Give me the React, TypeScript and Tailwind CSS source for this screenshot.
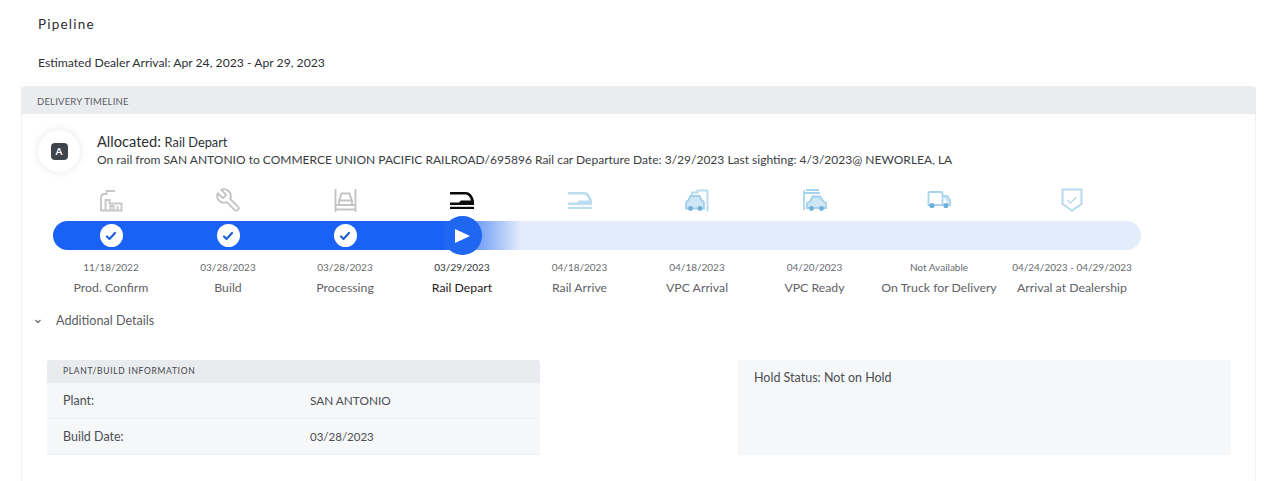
import React from "react";

const Factory = () => (
  <svg width="24" height="23" viewBox="0 0 24 23" fill="none" stroke="#c8c8c8" strokeWidth="1.900">
    <path d="M2 21.500V8.500c0-2 1-3.500 3-3.500h2.500V2H16" />
    <path d="M1 21.500h22.500M6.500 21V11h4v3.500h12V21M11.500 21v-4h3v4M18.500 21v-4" />
  </svg>
);

const Wrench = () => (
  <svg width="27" height="27" viewBox="0 0 24 24" fill="none" stroke="#c4c4c4" strokeWidth="1.700" strokeLinejoin="round" strokeLinecap="round" className="-rotate-90">
    <path d="M14.700 6.300a1 1 0 0 0 0 1.400l1.600 1.600a1 1 0 0 0 1.400 0l3.770-3.770a6 6 0 0 1-7.940 7.940l-6.910 6.910a2.120 2.120 0 0 1-3-3l6.910-6.910a6 6 0 0 1 7.940-7.940l-3.760 3.760z" />
  </svg>
);

const Lift = () => (
  <svg width="23" height="23" viewBox="0 0 23 23" fill="none" stroke="#c4c4c4" strokeWidth="1.900">
    <path d="M1.500 0v23M21.500 0v23M2 20.500h19M2 16h19" />
    <path d="M5 16v-4l2.500-7.500h8L18 12v4M5.500 11.500h12" />
  </svg>
);

const Train = ({ color }: { color: string }) => (
  <svg width="24" height="17" viewBox="0 0 24 17" fill={color}>
    <path d="M0 0H16C20 0 23 4 24 9V13H0V10.500H9L11 8.500H21C20 5 18 2.500 16 2.500H0Z" />
    <rect x="0" y="14.800" width="24" height="2.200" />
  </svg>
);

const RackCar = () => (
  <svg width="24" height="23" viewBox="0 0 24 23" fill="none">
    <path d="M22.500 1v21.500M7 6V3.500h5.500V1.500h10" stroke="#bcdcf0" strokeWidth="2" />
    <path d="M1 19.500v-5.500c0-1 1-2 2-2l2.500-5h9l2.500 5c1 0 2 1 2 2v5.500Z" stroke="#a3d0ec" strokeWidth="1.800" fill="#cfe6f5" />
    <circle cx="5.500" cy="19.500" r="2.400" fill="#6fb0da" />
    <circle cx="15" cy="19.500" r="2.400" fill="#6fb0da" />
  </svg>
);

const ReadyCar = () => (
  <svg width="24" height="23" viewBox="0 0 24 23" fill="none">
    <path d="M1 21V1.500M3 1h13M1 4h16" stroke="#a9d3ec" strokeWidth="1.800" />
    <path d="M4 19v-5l3-1.500 2.500-5h7.500l3.500 5c2 .5 3 1.500 3 3V19Z" stroke="#a3d0ec" strokeWidth="1.800" fill="#cfe6f5" />
    <circle cx="8.500" cy="19.500" r="2.400" fill="#6fb0da" />
    <circle cx="18.500" cy="19.500" r="2.400" fill="#6fb0da" />
  </svg>
);

const Truck = () => (
  <svg width="24" height="18" viewBox="0 0 24 18" fill="none">
    <path d="M3 14H1.500V2.500c0-1 .5-1.500 1.500-1.500h11c1 0 1.500.5 1.500 1.500V14H7" stroke="#a9d3ec" strokeWidth="1.800" />
    <path d="M16 5h4l3 4v5h-1.500M16 14h1" stroke="#a9d3ec" strokeWidth="1.800" fill="#cfe6f5" />
    <circle cx="5" cy="14.500" r="2.600" fill="#6fb0da" />
    <circle cx="19" cy="14.500" r="2.600" fill="#6fb0da" />
  </svg>
);

const Shield = () => (
  <svg width="22" height="24" viewBox="0 0 22 24" fill="none" stroke="#b8d8ec" strokeWidth="2">
    <path d="M1.500 1.500h19V16L11 22.500 1.500 16Z" />
    <path d="M6.500 12l3 3 6-6" strokeWidth="1.400" />
  </svg>
);

const CheckDot = () => (
  <span className="flex size-[23px] items-center justify-center rounded-full bg-white">
    <svg width="12" height="10" viewBox="0 0 12 10" fill="none" stroke="#1f5fd8" strokeWidth="2.200" strokeLinecap="round" strokeLinejoin="round">
      <path d="M2 5.500 4.500 8 10 2" />
    </svg>
  </span>
);

const PlayDot = () => (
  <span className="flex size-[39px] items-center justify-center rounded-full bg-[#1f66f0]">
    <svg width="15" height="14" viewBox="0 0 15 14" fill="white" className="ml-[1px]">
      <path d="M0 0 15 7 0 14Z" />
    </svg>
  </span>
);

type Step = {
  width: string;
  icon: React.ReactNode;
  date: string;
  label: string;
  state: "done" | "current" | "todo";
};

const steps: Step[] = [
  { width: "w-[116px]", icon: <Factory />, date: "11/18/2022", label: "Prod. Confirm", state: "done" },
  { width: "w-[118px]", icon: <Wrench />, date: "03/28/2023", label: "Build", state: "done" },
  { width: "w-[116px]", icon: <Lift />, date: "03/28/2023", label: "Processing", state: "done" },
  { width: "w-[118px]", icon: <Train color="#0a0a0a" />, date: "03/29/2023", label: "Rail Depart", state: "current" },
  { width: "w-[117px]", icon: <Train color="#bcdcf0" />, date: "04/18/2023", label: "Rail Arrive", state: "todo" },
  { width: "w-[118px]", icon: <RackCar />, date: "04/18/2023", label: "VPC Arrival", state: "todo" },
  { width: "w-[117px]", icon: <ReadyCar />, date: "04/20/2023", label: "VPC Ready", state: "todo" },
  { width: "w-[132px]", icon: <Truck />, date: "Not Available", label: "On Truck for Delivery", state: "todo" },
  { width: "w-[134px]", icon: <Shield />, date: "04/24/2023 - 04/29/2023", label: "Arrival at Dealership", state: "todo" },
];

export default function App() {
  return (
    <div className="h-[481px] overflow-hidden bg-white font-['Lato','Noto_Sans',sans-serif] text-[#3a3d42]">
      <div className="px-[38px] pt-[16px]">
        <h1 className="text-[13.500px] leading-[17px] tracking-[0.09em] text-[#2b2d30]">Pipeline</h1>
        <p className="mt-[22px] text-[12.200px] leading-[16px] text-[#2f3135]">
          Estimated Dealer Arrival: Apr 24, 2023 - Apr 29, 2023
        </p>
      </div>

      <section className="mx-[21px] mt-[15px] mr-[24px] h-[400px] border-x border-[#eff0f3]">
        <div className="-mx-px flex h-[28px] items-center rounded-t-[5px] bg-[#ebecf0] pt-[5px] pl-[16px] text-[9.500px] tracking-[0.02em] text-[#5b5e64]">
          DELIVERY TIMELINE
        </div>

        <div className="mt-[16px] flex pl-[16px]">
          <div className="flex size-[42px] items-center justify-center rounded-full bg-white shadow-[0_0_8px_rgba(0,0,0,0.1)]">
            <span className="flex size-[17px] items-center justify-center rounded-[4px] bg-[#3f434b] text-[10px] font-bold text-white">A</span>
          </div>
          <div className="ml-[17px] mt-[2px]">
            <p className="text-[14.600px] leading-[19px] text-[#2d2f33]">
              Allocated: <span className="text-[12.800px]">Rail Depart</span>
            </p>
            <p className="text-[12.030px] leading-[16px] text-[#3a3d42]">
              On rail from SAN ANTONIO to COMMERCE UNION PACIFIC RAILROAD/695896 Rail car Departure Date: 3/29/2023 Last sighting: 4/3/2023@ NEWORLEA, LA
            </p>
          </div>
        </div>

        <div className="ml-[31px] w-[1088px]">
          <div className="mt-[16px] flex h-[24px] items-center">
            {steps.map((s) => (
              <div key={s.label} className={`flex justify-center ${s.width}`}>
                {s.icon}
              </div>
            ))}
          </div>
          <div className="mt-[9px] flex h-[29px] items-center rounded-full bg-[linear-gradient(90deg,#1a62f5_0,#1a62f5_390px,#e3ecfb_468px)]">
            {steps.map((s) => (
              <div key={s.label} className={`flex justify-center ${s.width}`}>
                {s.state === "done" && <CheckDot />}
                {s.state === "current" && <PlayDot />}
              </div>
            ))}
          </div>
          <div className="mt-[10px] flex">
            {steps.map((s) => {
              const current = s.state === "current";
              return (
                <div key={s.label} className={`shrink-0 text-center ${s.width}`}>
                  <div className={`text-[10px] leading-[15px] whitespace-nowrap ${current ? "text-[#2f3135]" : "text-[#686b70]"}`}>{s.date}</div>
                  <div className={`mt-[5px] text-[12.300px] leading-[16px] whitespace-nowrap ${current ? "text-[#1e2023]" : "text-[#5f6267]"}`}>{s.label}</div>
                </div>
              );
            })}
          </div>
        </div>

        <div className="mt-[17px] flex items-center pl-[13px] text-[12.600px] leading-[16px] text-[#5a5d62]">
          <svg width="6" height="5" viewBox="0 0 6 5" fill="none" stroke="#6b6e73" strokeWidth="1.300">
            <path d="M.5 1 3 3.500 5.500 1" />
          </svg>
          <span className="ml-[15px]">Additional Details</span>
        </div>

        <div className="mt-[31px] flex justify-between pr-[24px] pl-[25px]">
          <div className="w-[493px]">
            <div className="flex h-[23px] items-center rounded-t-[3px] bg-[#e9ebee] pl-[16px] text-[8.500px] tracking-[0.08em] text-[#44474c]">
              PLANT/BUILD INFORMATION
            </div>
            <div className="flex h-[36px] items-center border-b border-[#eff0f3] bg-[#f6f7f9] pl-[16px] text-[12.500px] text-[#4a4d52]">
              <span className="w-[247px] pt-[1px]">Plant:</span>
              <span className="text-[11.800px]">SAN ANTONIO</span>
            </div>
            <div className="flex h-[36px] items-center border-b border-[#eff0f3] bg-[#f6f7f9] pl-[16px] text-[12.500px] text-[#4a4d52]">
              <span className="w-[247px] pt-[1px]">Build Date:</span>
              <span className="text-[11.500px]">03/28/2023</span>
            </div>
          </div>
          <div className="h-[95px] w-[493px] bg-[#f6f7f9] px-[16px] py-[10px] text-[12.500px] leading-[16px] text-[#4a4d52]">
            Hold Status: Not on Hold
          </div>
        </div>
      </section>
    </div>
  );
}
